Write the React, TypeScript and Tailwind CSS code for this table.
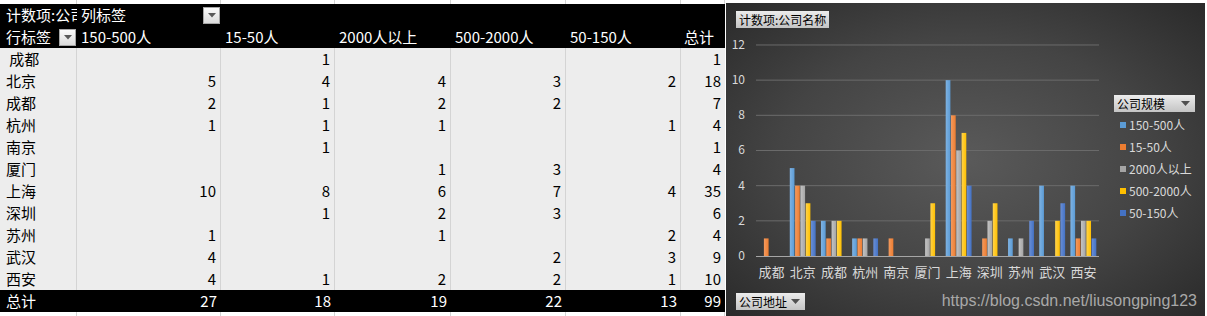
import React from "react"

const sizes = ["150-500人", "15-50人", "2000人以上", "500-2000人", "50-150人"]

const rows: [string, (number | null)[], number][] = [
  [" 成都", [null, 1, null, null, null], 1],
  ["北京", [5, 4, 4, 3, 2], 18],
  ["成都", [2, 1, 2, 2, null], 7],
  ["杭州", [1, 1, 1, null, 1], 4],
  ["南京", [null, 1, null, null, null], 1],
  ["厦门", [null, null, 1, 3, null], 4],
  ["上海", [10, 8, 6, 7, 4], 35],
  ["深圳", [null, 1, 2, 3, null], 6],
  ["苏州", [1, null, 1, null, 2], 4],
  ["武汉", [4, null, null, 2, 3], 9],
  ["西安", [4, 1, 2, 2, 1], 10],
]

const totals = [27, 18, 19, 22, 13, 99]

const colors = ["#5b9bd5", "#ed7d31", "#a5a5a5", "#ffc000", "#4472c4"]
const lights = ["#7fb3e3", "#f39a5e", "#c4c4c4", "#ffd34d", "#6a8fd6"]

const grid = "grid grid-cols-[77px_144px_114px_116px_115px_115px_44px]"

function Dropdown() {
  return (
    <div className="w-[17px] h-[17px] border border-[#a6a6a6] bg-gradient-to-b from-[#fbfbfb] to-[#dcdcdc] flex items-center justify-center">
      <svg width="8" height="5" viewBox="0 0 8 5">
        <path d="M0 0 L8 0 L4 4.5 Z" fill="#5a5a5a" />
      </svg>
    </div>
  )
}

function GridStrip() {
  return (
    <div className={`${grid} h-[4px]`}>
      {Array.from({ length: 7 }).map((_, i) => (
        <div key={i} className="border-r border-[#d4d4d4]" />
      ))}
    </div>
  )
}

function PivotTable() {
  return (
    <div className="w-[725px] shrink-0 font-['Noto_Sans_CJK_SC',sans-serif] text-[15px] leading-[22px]">
      <GridStrip />
      {/* header */}
      <div className={`${grid} bg-black text-white`}>
        <div className="h-[22px] pl-[6px] overflow-hidden whitespace-nowrap">计数项:公司名称</div>
        <div className="h-[22px] pl-[4px] pr-[1px] flex items-center justify-between">
          <span>列标签</span>
          <Dropdown />
        </div>
        <div className="col-span-5" />
        <div className="h-[22px] pl-[6px] pr-[1px] flex items-center justify-between">
          <span>行标签</span>
          <Dropdown />
        </div>
        {sizes.map((s) => (
          <div key={s} className="h-[22px] pl-[4px] whitespace-nowrap">
            {s}
          </div>
        ))}
        <div className="h-[22px] pl-[3px]">总计</div>
      </div>
      {/* body */}
      {rows.map(([name, vals, total], r) => (
        <div key={r} className={`${grid} bg-[#ededed] text-black`}>
          <div className="h-[22px] pl-[6px] border-r border-[#d4d4d4] whitespace-pre">{name}</div>
          {vals.map((v, i) => (
            <div key={i} className="h-[22px] pr-[4px] text-right border-r border-[#d4d4d4]">
              {v ?? ""}
            </div>
          ))}
          <div className="h-[22px] pr-[4px] text-right">{total}</div>
        </div>
      ))}
      <div className={`${grid} bg-black text-white`}>
        <div className="h-[22px] pl-[6px]">总计</div>
        {totals.map((t, i) => (
          <div key={i} className="h-[22px] pr-[4px] text-right">
            {t}
          </div>
        ))}
      </div>
      <GridStrip />
    </div>
  )
}

function ChartButton({ label, arrow, className }: { label: string; arrow?: boolean; className?: string }) {
  return (
    <div
      className={`h-[17px] px-[3px] flex items-center justify-between bg-gradient-to-b from-[#ececec] to-[#c4c4c4] text-black text-[12px] leading-[17px] ${className ?? ""}`}
    >
      <span>{label}</span>
      {arrow && (
        <svg width="9" height="5" viewBox="0 0 9 5" className="ml-[4px] mr-[2px]">
          <path d="M0 0 L9 0 L4.5 5 Z" fill="#505050" />
        </svg>
      )}
    </div>
  )
}

function Plot() {
  const x0 = 30
  const catW = 343 / 11
  const base = 228
  const unit = 35.17 / 2
  return (
    <svg width="386" height="258" className="shrink-0" fontFamily="Noto Sans CJK SC, sans-serif">
      <defs>
        {colors.map((c, i) => (
          <linearGradient key={i} id={`g${i}`} x1="0" x2="1" y1="0" y2="0">
            <stop offset="0" stopColor={lights[i]} />
            <stop offset="1" stopColor={c} />
          </linearGradient>
        ))}
      </defs>
      {[2, 4, 6, 8, 10, 12].map((v) => (
        <line key={v} x1={x0} x2={373} y1={base - v * unit} y2={base - v * unit} stroke="#6b6b6b" strokeWidth="1" />
      ))}
      {[0, 2, 4, 6, 8, 10, 12].map((v) => (
        <text key={v} x={19} y={base - v * unit + 4} textAnchor="end" fontSize="12" fill="#d9d9d9">
          {v}
        </text>
      ))}
      {rows.map(([name, vals], c) =>
        vals.map((v, s) =>
          v ? (
            <rect
              key={`${c}-${s}`}
              x={x0 + c * catW + 2.6 + s * 5.3}
              y={base - v * unit}
              width={4.7}
              height={v * unit}
              fill={`url(#g${s})`}
            />
          ) : null
        )
      )}
      <line x1={x0} x2={373} y1={base + 0.5} y2={base + 0.5} stroke="#a6a6a6" strokeWidth="1" />
      {rows.map(([name], c) => (
        <text key={c} x={x0 + c * catW + catW / 2} y={249} textAnchor="middle" fontSize="13" fill="#d9d9d9">
          {name.trim()}
        </text>
      ))}
    </svg>
  )
}

function Chart() {
  return (
    <div className="w-[479px] h-[313px] flex flex-col bg-[radial-gradient(ellipse_at_center,#5a5a5a_0%,#444444_55%,#2a2a2a_100%)] font-['Noto_Sans_CJK_SC',sans-serif]">
      <div className="pt-[8px] pl-[10px] flex">
        <ChartButton label="计数项:公司名称" />
      </div>
      <div className="flex">
        <Plot />
        <div className="ml-[2px] mt-[67px] w-[81px] flex flex-col">
          <ChartButton label="公司规模" arrow />
          <div className="mt-[2px] flex flex-col">
            {sizes.map((s, i) => (
              <div key={s} className="h-[22px] pl-[6px] flex items-center gap-[3px] text-[12px] text-[#d9d9d9]">
                <span className="w-[6px] h-[6px]" style={{ backgroundColor: colors[i] }} />
                <span>{s}</span>
              </div>
            ))}
          </div>
        </div>
      </div>
      <div className="mt-[3px] flex items-center pl-[10px] pr-[8px]">
        <ChartButton label="公司地址" arrow />
        <span className="ml-auto text-[16px] text-[#a8a8a8] font-['Liberation_Sans',sans-serif]">
          https://blog.csdn.net/liusongping123
        </span>
      </div>
    </div>
  )
}

export default function App() {
  return (
    <div className="w-[1207px] h-[316px] bg-white flex overflow-hidden">
      <PivotTable />
      <div className="ml-[1px] flex flex-col">
        <div className="h-[3px]" />
        <Chart />
      </div>
    </div>
  )
}
